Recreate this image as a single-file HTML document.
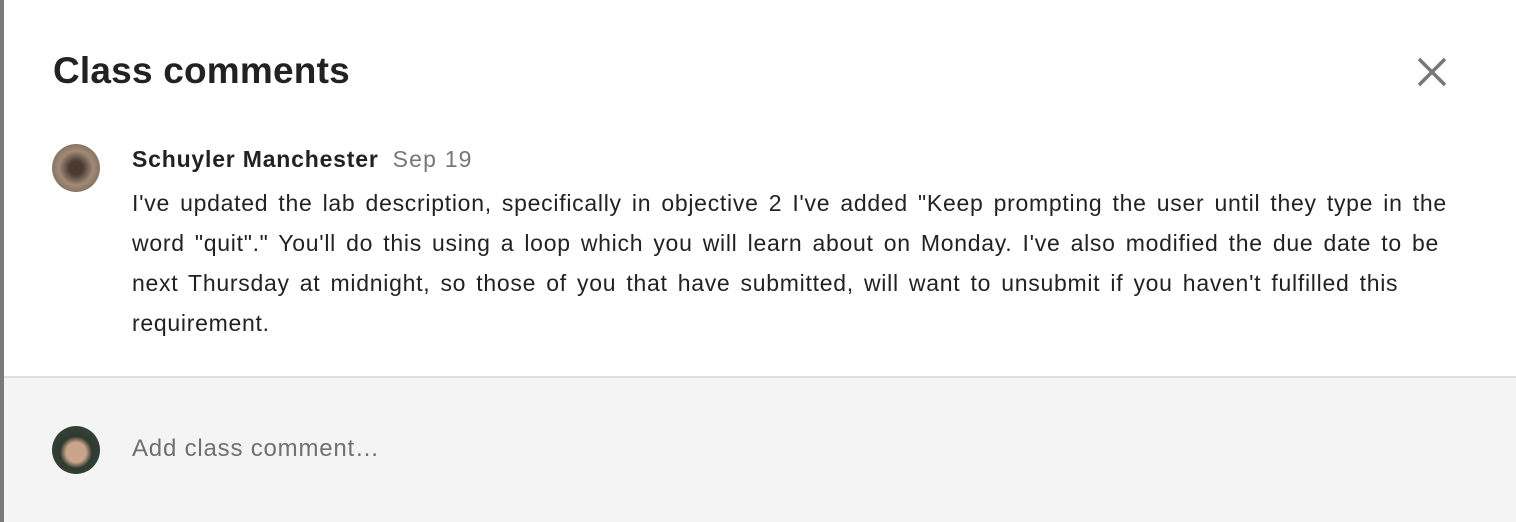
<!DOCTYPE html><html><head><style>
body{margin:0;width:1516px;height:522px;overflow:hidden;background:#fff;font-family:"Liberation Sans",Arial,sans-serif;position:relative}
.lb{position:absolute;left:0;top:0;width:4px;height:522px;background:#7a7a7a}
.t{position:absolute;left:53px;top:50px;font-size:37px;font-weight:bold;color:#222;letter-spacing:0.2px}
.av{position:absolute;left:52px;width:48px;height:48px;border-radius:50%}
.n{position:absolute;left:132px;top:146px;font-size:23px;color:#222;font-weight:bold;letter-spacing:0.8px;white-space:nowrap}
.n span{font-weight:normal;color:#777;margin-left:14px;letter-spacing:1.2px}
.b{position:absolute;left:132px;top:183px;font-size:23px;line-height:40px;color:#222;letter-spacing:0.72px;word-spacing:3px;white-space:nowrap}
.f{position:absolute;left:4px;top:376px;right:0;bottom:0;background:#f4f4f4;border-top:2px solid #e0e0e0}
.p{position:absolute;left:132px;top:435px;font-size:24px;color:#707070;letter-spacing:0.8px}
</style></head><body>
<div class="lb"></div>
<div class="t">Class comments</div>
<svg style="position:absolute;left:1416px;top:56px" width="32" height="32"><path d="M3 3L29 29M29 3L3 29" stroke="#777" stroke-width="3.5"/></svg>
<div class="av" style="top:144px;background:radial-gradient(circle at 50% 50%,#4a3a30 0 20%,#a08a78 50%,#6b5344 100%)"></div>
<div class="n">Schuyler Manchester<span>Sep 19</span></div>
<div class="b">I've updated the lab description, specifically in objective 2 I've added "Keep prompting the user until they type in the<br>word "quit"." You'll do this using a loop which you will learn about on Monday. I've also modified the due date to be<br>next Thursday at midnight, so those of you that have submitted, will want to unsubmit if you haven't fulfilled this<br>requirement.</div>
<div class="f"></div>
<div class="av" style="top:426px;background:radial-gradient(circle at 50% 55%,#c9a48a 0 28%,#2e3a30 45%,#3a4a3a 100%)"></div>
<div class="p">Add class comment…</div>
</body></html>
